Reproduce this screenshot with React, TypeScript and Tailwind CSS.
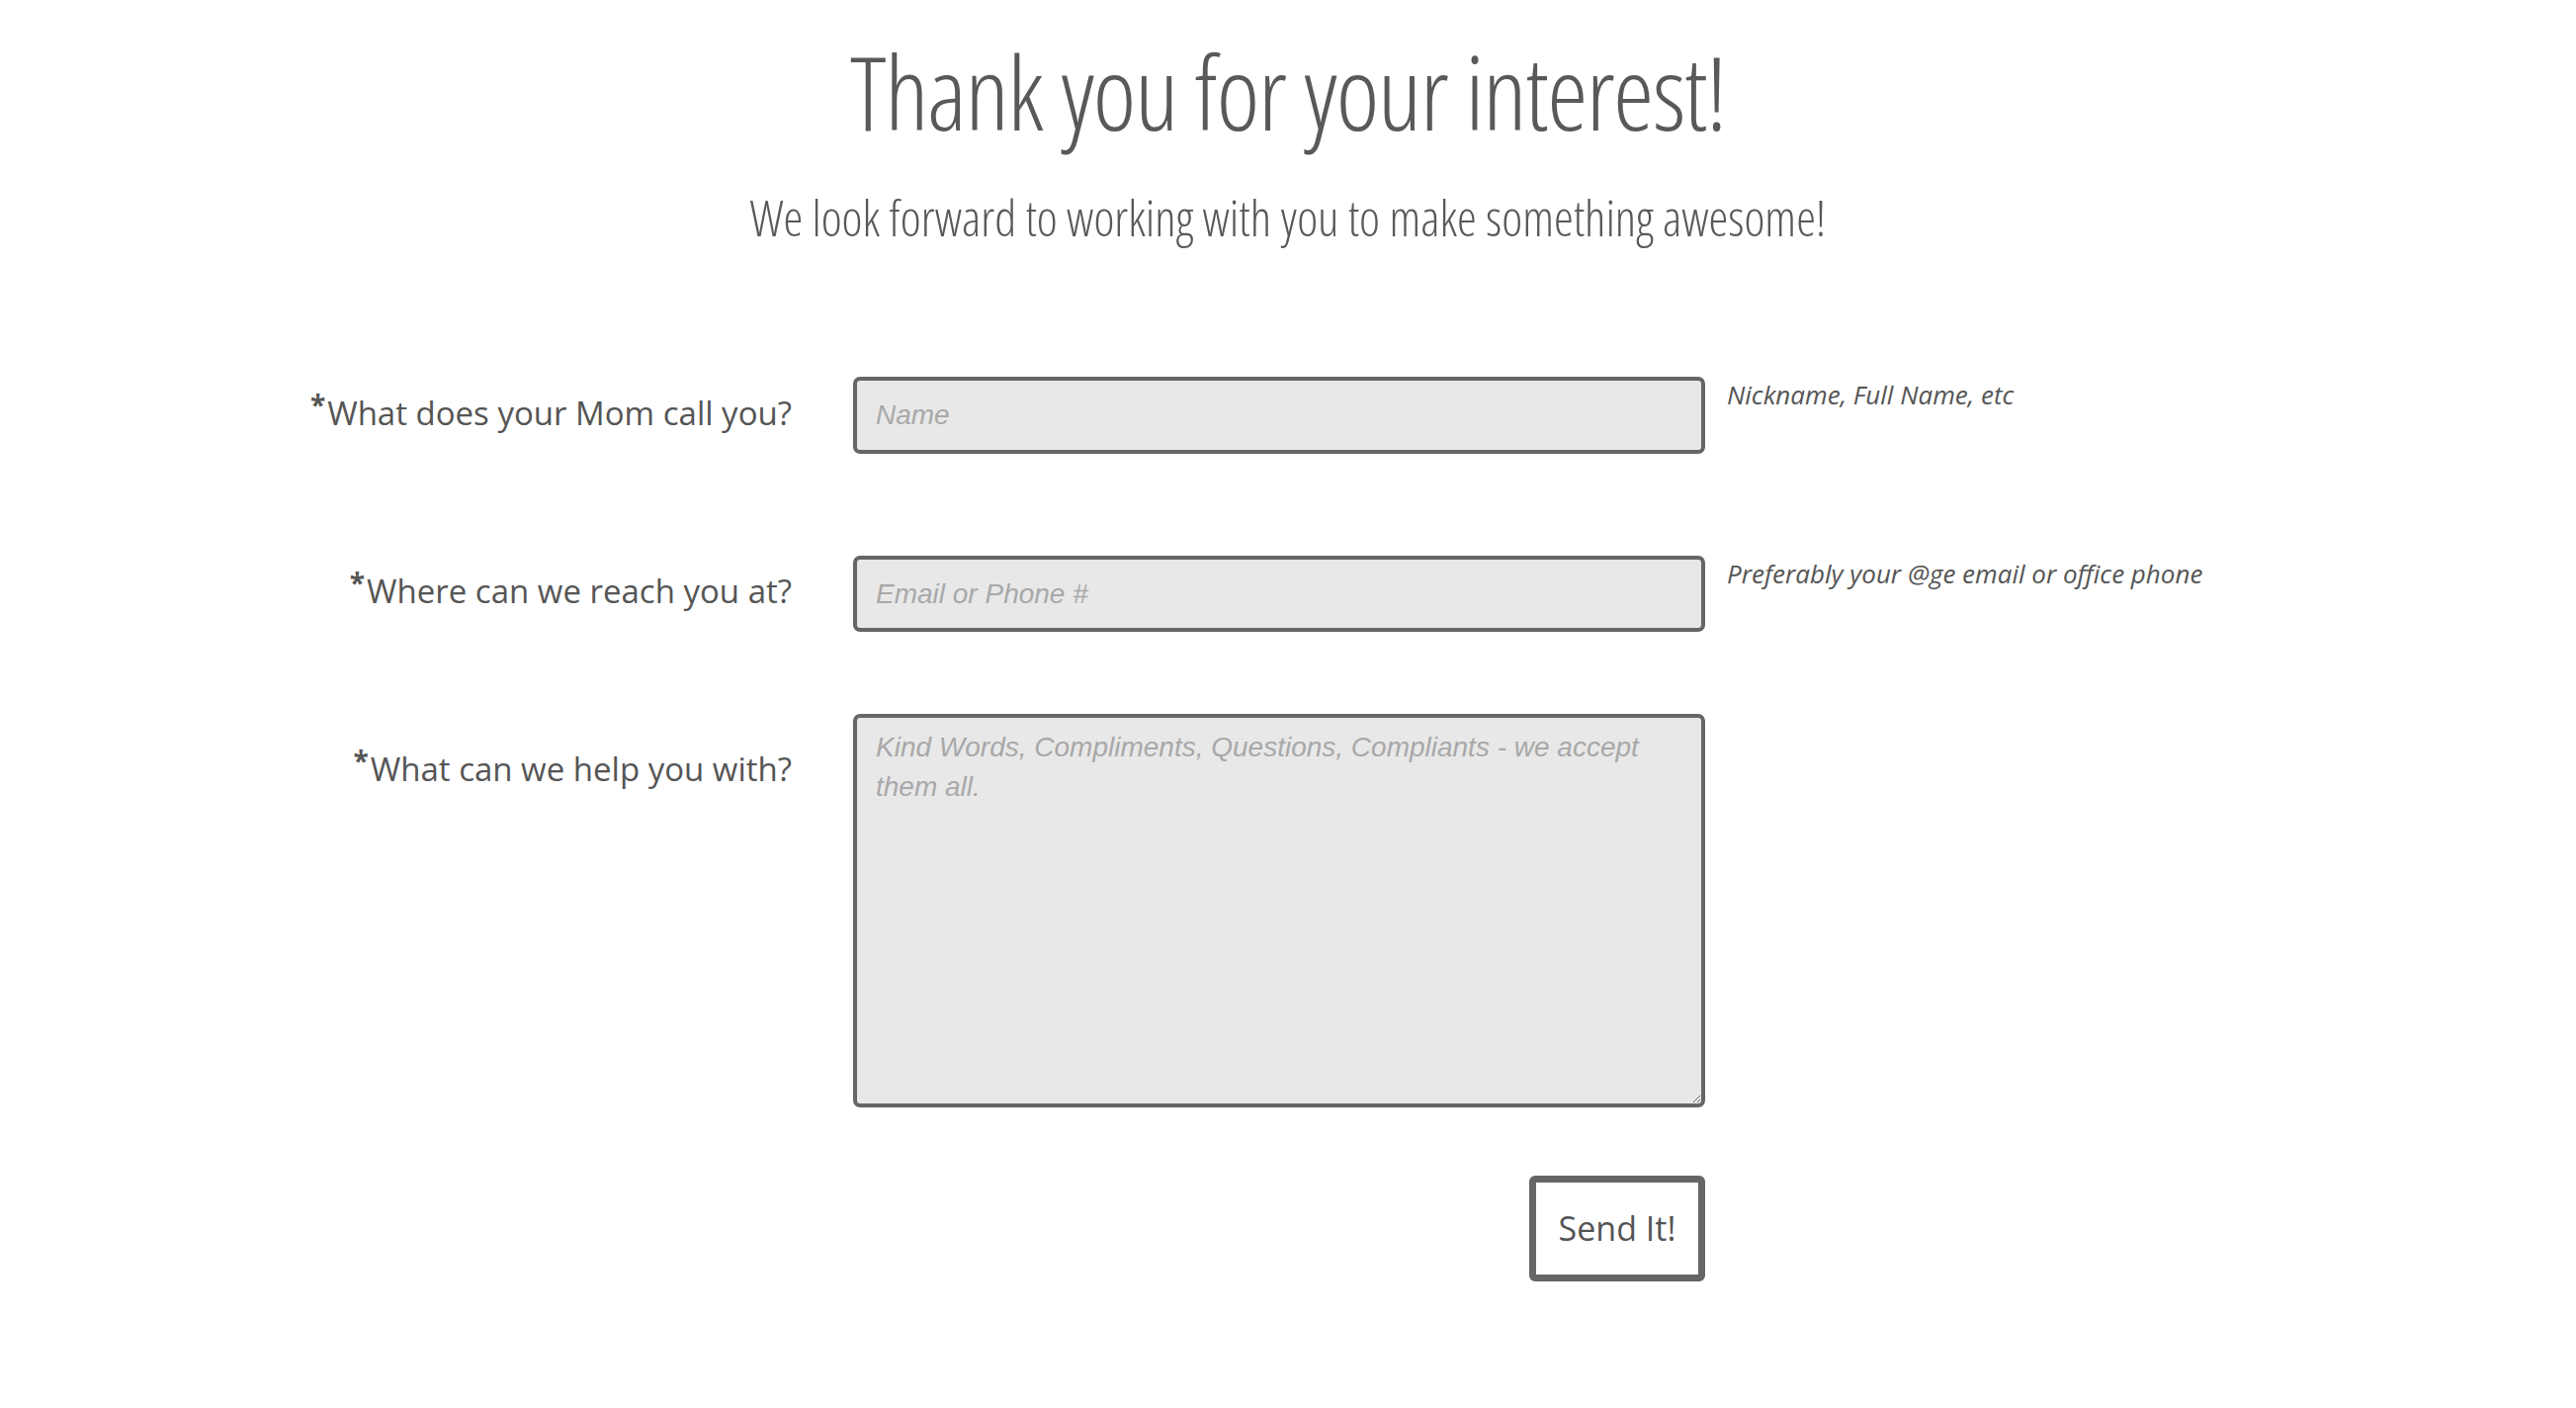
function Field({ label, hint, children, labelOffset }: { label: string; hint?: string; children: React.ReactNode; labelOffset: string }) {
  return (
    <div className="grid grid-cols-[863px_862px_1fr]">
      <label className={`pr-[62px] text-right text-[33px] leading-[1.4] text-[#555] ${labelOffset}`}>
        <span className="relative -top-[10px] mr-[2px] text-[28px] font-bold">*</span>
        {label}
      </label>
      <div>{children}</div>
      <div className="pl-[22px] text-[26px] italic leading-[1.4] text-[#555]">{hint}</div>
    </div>
  )
}

function App() {
  const inputCls =
    "w-full rounded-[7px] border-4 border-[#666] bg-[#e8e8e8] px-[19px] text-[28px] italic text-[#555] outline-none placeholder:text-[#a8a8a8] font-['Liberation_Sans',Arial,sans-serif]"

  return (
    <div className="min-h-screen bg-white font-['Open_Sans','Noto_Sans',sans-serif] text-[#555]">
      {/* Header */}
      <div className="flex flex-col items-center pt-[35px]">
        <h1 className="text-[104px] font-light leading-[1.1] tracking-[-1.5px] text-[#595959] [font-stretch:75%]">
          Thank you for your interest!
        </h1>
        <p className="mt-[44px] text-[50px] font-light leading-[1.1] text-[#595959] [font-stretch:75%]">
          We look forward to working with you to make something awesome!
        </p>
      </div>

      {/* Form */}
      <form className="mt-[133px] flex flex-col" onSubmit={(e) => e.preventDefault()}>
        <Field label="What does your Mom call you?" hint="Nickname, Full Name, etc" labelOffset="pt-[14px]">
          <input className={`${inputCls} h-[78px]`} placeholder="Name" />
        </Field>

        <div className="h-[103px]" />

        <Field label="Where can we reach you at?" hint="Preferably your @ge email or office phone" labelOffset="pt-[13px]">
          <input className={`${inputCls} h-[77px]`} placeholder="Email or Phone #" />
        </Field>

        <div className="h-[83px]" />

        <Field label="What can we help you with?" labelOffset="pt-[33px]">
          <textarea
            className={`${inputCls} block h-[398px] py-[10px] leading-[40px]`}
            placeholder="Kind Words, Compliments, Questions, Compliants - we accept them all."
          />
        </Field>

        <div className="grid grid-cols-[863px_862px_1fr] pt-[69px]">
          <div />
          <div className="flex justify-end">
            <button
              type="submit"
              className="h-[107px] w-[178px] rounded-[6px] border-[7px] border-[#666] bg-white text-[34px] text-[#555]"
            >
              Send It!
            </button>
          </div>
        </div>
      </form>
    </div>
  )
}

export default App
